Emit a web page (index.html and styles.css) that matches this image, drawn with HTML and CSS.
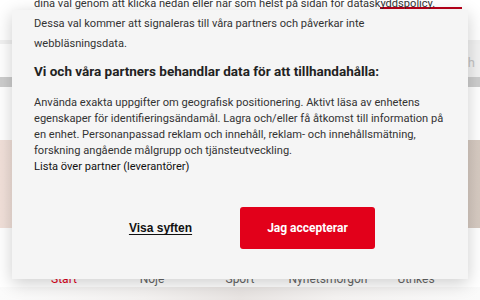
FILE: index.html
```html
<!DOCTYPE html>
<html lang="sv">
<head>
<meta charset="utf-8">
<title>Samtycke</title>
<link rel="stylesheet" href="styles.css">
</head>
<body>
<div class="page">
  <header class="top">
    <div class="top-accent"></div>
  </header>
  <div class="search-row">
    <div class="search-box"><span class="search-text">Search</span></div>
  </div>
  <div class="band"></div>
  <div class="spacer"></div>
  <div class="hero"></div>
  <nav class="nav">
    <span class="nav-item active">Start</span>
    <span class="nav-item">Nöje</span>
    <span class="nav-item">Sport</span>
    <span class="nav-item">Nyhetsmorgon</span>
    <span class="nav-item">Utrikes</span>
  </nav>
  <div class="strip"></div>
</div>

<div class="dialog" role="dialog">
  <p class="intro">dina val genom att klicka nedan eller när som helst på sidan för dataskyddspolicy.<br>Dessa val kommer att signaleras till våra partners och påverkar inte<br>webbläsningsdata.</p>
  <h2 class="heading">Vi och våra partners behandlar data för att tillhandahålla:</h2>
  <p class="body">Använda exakta uppgifter om geografisk positionering. Aktivt läsa av enhetens<br>egenskaper för identifieringsändamål. Lagra och/eller få åtkomst till information på<br>en enhet. Personanpassad reklam och innehåll, reklam- och innehållsmätning,<br>forskning angående målgrupp och tjänsteutveckling.</p>
  <p class="partners">Lista över partner (leverantörer)</p>
  <div class="actions">
    <button class="btn btn-link">Visa syften</button>
    <button class="btn btn-primary">Jag accepterar</button>
  </div>
</div>
</body>
</html>
```

FILE: styles.css
```css
* { box-sizing: border-box; }

html, body {
  margin: 0;
  padding: 0;
}

body {
  width: 480px;
  height: 300px;
  overflow: hidden;
  position: relative;
  background: #ffffff;
  font-family: Roboto, "Liberation Sans", sans-serif;
}

.page {
  display: flex;
  flex-direction: column;
  height: 300px;
}

.top {
  flex: none;
  height: 44px;
  display: flex;
  justify-content: flex-end;
  padding-right: 18px;
  border-bottom: 4px solid #f1f1f1;
}

.top-accent {
  width: 82px;
  height: 2px;
  margin-top: 7px;
  background: #b8001a;
}

.search-row {
  flex: none;
  height: 33px;
  display: flex;
  justify-content: flex-end;
}

.search-box {
  width: 200px;
  background: #f2f2f2;
  display: flex;
  align-items: center;
  justify-content: flex-end;
  padding: 4px 5px 0 0;
}

.search-text {
  font-size: 13px;
  color: #c4c4c4;
}

.band {
  flex: none;
  height: 10px;
  background: #cdcdcd;
}

.spacer {
  flex: none;
  height: 53px;
}

.hero {
  flex: none;
  height: 88px;
  background: linear-gradient(90deg, #f1e0d9 0%, #eadbd3 50%, #d6cac1 100%);
}

.nav {
  flex: none;
  height: 59px;
  display: grid;
  grid-template-columns: repeat(5, 1fr);
  align-items: end;
  padding: 0 20px;
}

.nav-item {
  text-align: center;
  font-size: 12px;
  line-height: 16px;
  color: #666;
}

.nav-item.active {
  color: #e2001a;
}

.strip {
  flex: 1;
  background: linear-gradient(90deg, #fbfbfb 0%, #f3f1f0 30%, #e8e4e2 50%, #f4f2f1 70%, #fafafa 100%);
}

.dialog {
  position: absolute;
  left: 12px;
  top: 10px;
  width: 456px;
  height: 269px;
  background: #f5f5f5;
  box-shadow: 0 4px 16px rgba(0, 0, 0, 0.2);
  padding: 0 22px;
  color: #333;
}

.intro {
  margin: -16px 0 0;
  font-size: 11.1px;
  line-height: 20px;
  white-space: nowrap;
  color: #333;
}

.heading {
  margin: 7px 0 0;
  font-size: 13.5px;
  line-height: 20px;
  font-weight: 700;
  color: #222;
  white-space: nowrap;
}

.body {
  margin: 14px 0 0;
  font-size: 11.1px;
  line-height: 16px;
  color: #333;
  white-space: nowrap;
}

.partners {
  margin: 0;
  font-size: 11.1px;
  line-height: 16px;
  font-weight: 400;
  color: #111;
}

.actions {
  display: flex;
  gap: 12px;
  margin-top: 32px;
  padding-left: 59px;
}

.btn {
  width: 135px;
  height: 42px;
  border: 0;
  border-radius: 3px;
  font-size: 12px;
  font-weight: 700;
  cursor: pointer;
}

.btn-link {
  background: transparent;
  color: #111;
  text-decoration: underline;
  text-underline-offset: 2px;
  font-family: "Liberation Sans", Arial, sans-serif;
}

.btn-primary {
  background: #e2001a;
  color: #fff;
  font-family: Roboto, "Liberation Sans", sans-serif;
}
```
